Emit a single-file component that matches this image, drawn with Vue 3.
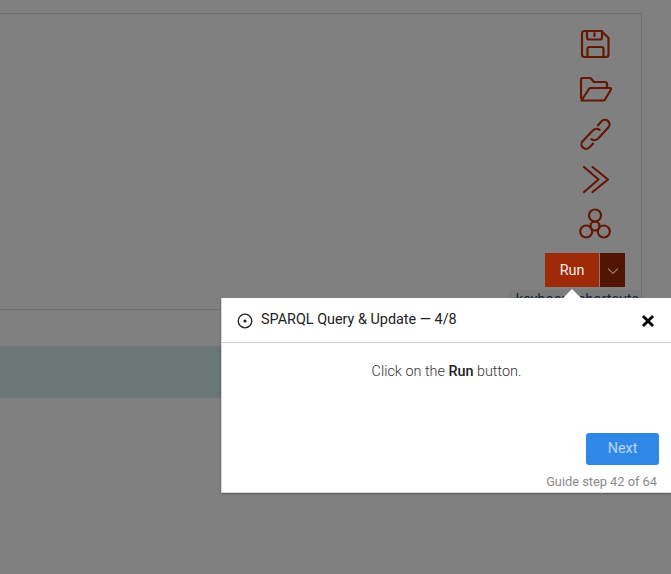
<template>
  <div class="page">
    <div class="editor">
      <div class="tools">
        <button class="tool" v-for="icon in icons" :key="icon.name">
          <svg width="34" height="34" viewBox="0 0 34 34" fill="none" stroke="#641804" stroke-width="2.2" stroke-linejoin="round" stroke-linecap="round">
            <path v-for="d in icon.paths" :key="d" :d="d" />
            <circle v-for="c in icon.circles" :key="c[0] + '-' + c[1]" :cx="c[0]" :cy="c[1]" :r="c[2]" />
          </svg>
        </button>
        <div class="run-row">
          <button class="run">Run</button>
          <button class="run-more">
            <svg width="12" height="8" viewBox="0 0 12 8" fill="none" stroke="#9a7468" stroke-width="1.2">
              <path d="M1 1.5 6 6.5 11 1.5" />
            </svg>
          </button>
        </div>
        <div class="shortcuts">keyboard shortcuts</div>
      </div>
    </div>
    <div class="result-bar"></div>

    <div class="guide">
      <div class="arrow"></div>
      <div class="guide-head">
        <svg class="target" width="16" height="16" viewBox="0 0 16 16" fill="none" stroke="#222">
          <circle cx="8" cy="8" r="6.8" stroke-width="1.3" />
          <circle cx="8" cy="8" r="1.6" fill="#222" stroke="none" />
        </svg>
        <span class="guide-title">SPARQL Query &amp; Update — 4/8</span>
        <svg class="close" width="14" height="14" viewBox="0 0 14 14" fill="none" stroke="#000" stroke-width="2.8">
          <path d="M2 2 12 12M12 2 2 12" />
        </svg>
      </div>
      <div class="guide-body">Click on the <b>Run</b> button.</div>
      <div class="guide-actions">
        <button class="next">Next</button>
      </div>
      <div class="guide-step">Guide step 42 of 64</div>
    </div>
  </div>
</template>

<script setup>
const icons = [
  {
    name: "save",
    paths: [
      "M6.5 4H23.5L30.5 11V27.5A2.5 2.5 0 0 1 28 30H6.5A2.5 2.5 0 0 1 4 27.5V6.5A2.5 2.5 0 0 1 6.5 4Z",
      "M9 4V10.5A2 2 0 0 0 11 12.5H22A2 2 0 0 0 24 10.5V4.5",
      "M16.5 6V9",
      "M9.5 29.5V22A2 2 0 0 1 11.5 20H23.5A2 2 0 0 1 25.5 22V29.5",
    ],
  },
  {
    name: "open",
    paths: [
      "M3 26V8A2 2 0 0 1 5 6H12.5L16 10H27A2 2 0 0 1 29 12V15.5",
      "M3.5 28.5H25A2.5 2.5 0 0 0 27 27.5L33 17.5A1 1 0 0 0 32.2 16H13A2.5 2.5 0 0 0 11 17L3.5 28.5Z",
    ],
  },
  {
    name: "link",
    paths: [
      "M20 8.3 23.55 4.26A4.6 4.6 0 0 1 30.45 10.34L19.95 21.64A4.6 4.6 0 0 1 13.46 22.05",
      "M15 26.7 11.45 30.34A4.6 4.6 0 0 1 4.55 24.26L15.05 13.36A4.6 4.6 0 0 1 21.54 12.95",
    ],
  },
  {
    name: "forward",
    paths: ["M6 5 20.5 17.5 6 30", "M14.5 5 30 17.5 14.5 30"],
  },
  {
    name: "graph",
    circles: [
      [17, 8.5, 6],
      [8.2, 24.5, 6],
      [25.8, 24.5, 6],
      [17, 19, 4.5],
    ],
  },
];
</script>

<style scoped>
.page {
  position: relative;
  height: 574px;
  padding-top: 13px;
  box-sizing: border-box;
  background: #808080;
  overflow: hidden;
  font-family: Roboto, "Liberation Sans", sans-serif;
}

.editor {
  height: 295px;
  margin-right: 29px;
  border-top: 1px solid #6e6e6e;
  border-right: 1px solid #6e6e6e;
  border-bottom: 1px solid #6e6e6e;
  display: flex;
  justify-content: flex-end;
}

.tools {
  display: flex;
  flex-direction: column;
  align-items: flex-end;
  padding: 8px 16px 0 0;
  height: 300px;
}

.tool {
  width: 34px;
  height: 45px;
  margin-right: 13px;
  padding: 5px 0 0;
  border: none;
  background: none;
  display: flex;
  align-items: flex-start;
  justify-content: center;
}

.run-row {
  display: flex;
  gap: 1px;
  margin-top: 6px;
}

.run {
  width: 54px;
  height: 34px;
  padding: 0;
  border: none;
  background: #9f2a08;
  color: #f6ebe7;
  font: 14.4px Roboto, sans-serif;
}

.run-more {
  width: 25px;
  height: 34px;
  padding: 0;
  border: none;
  background: #521503;
}

.shortcuts {
  margin: 3px -15px 0 0;
  padding: 0 1px 0 7px;
  background: #7b7b7b;
  color: #0e2a4a;
  font-size: 14.4px;
  line-height: 20px;
  white-space: nowrap;
}

.result-bar {
  height: 52px;
  margin-top: 36px;
  background: #6b7776;
}

.guide {
  position: absolute;
  left: 221px;
  top: 298px;
  width: 450px;
  height: 195px;
  background: #fff;
  box-sizing: border-box;
  border-left: 1px solid #d8d8d8;
  border-bottom: 1px solid #d8d8d8;
  box-shadow: 0 1px 2px rgba(0, 0, 0, 0.3);
  display: flex;
  flex-direction: column;
}

.arrow {
  position: absolute;
  left: 341px;
  top: -9px;
  width: 0;
  height: 0;
  border-left: 9px solid transparent;
  border-right: 9px solid transparent;
  border-bottom: 9px solid #fff;
}

.guide-head {
  height: 44px;
  padding: 0 16px 0 15px;
  border-bottom: 1px solid #ccc;
  display: flex;
  align-items: center;
  color: #222;
}

.target {
  margin-right: 8px;
  margin-top: 2px;
}

.guide-title {
  flex: 1;
  font-size: 14.4px;
  font-weight: 400;
  margin-top: -1px;
}

.close {
  margin-top: 1px;
}

.guide-body {
  padding-top: 19px;
  text-align: center;
  font-size: 14.4px;
  font-weight: 300;
  line-height: 20px;
  color: #333;
}

.guide-body b {
  font-weight: 500;
  color: #222;
}

.guide-actions {
  display: flex;
  justify-content: flex-end;
  padding: 51px 12px 0 0;
}

.next {
  width: 73px;
  height: 32px;
  padding: 0 0 2px;
  border: none;
  border-radius: 3px;
  background: #2f88e8;
  color: #bcd6f5;
  font: 400 14.4px Roboto, sans-serif;
}

.guide-step {
  padding: 9px 14px 0 0;
  text-align: right;
  font-size: 12.8px;
  line-height: 16px;
  color: #8a8a8a;
}
</style>
